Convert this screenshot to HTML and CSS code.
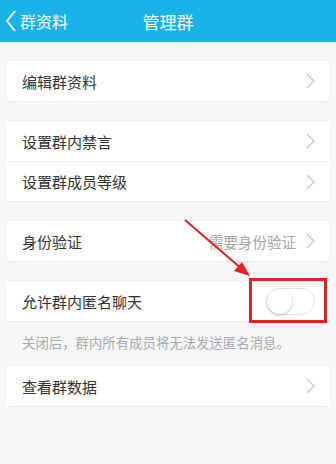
FILE: index.html
```html
<!DOCTYPE html>
<html lang="zh-CN">
    <head>
        <meta charset="UTF-8" />
        <meta name="viewport" content="width=device-width, initial-scale=1.0" />
        <title>管理群</title>
        <link rel="stylesheet" href="styles.css">
    </head>
    <body>
        <!-- Top bar -->
        <header class="topbar">
            <a class="back" href="#">
                <svg width="12" height="22" viewBox="0 0 12 22">
                    <polyline points="10,1 2,11 10,21" fill="none" stroke="#fff" stroke-width="1.8" />
                </svg>
                <span>群资料</span>
            </a>
            <h1 class="title">管理群</h1>
            <span></span>
        </header>

        <main class="content">
            <div class="group">
                <div class="row">
                    <span class="label">编辑群资料</span>
                    <svg class="chevron" width="9" height="16" viewBox="0 0 9 16"><polyline points="1,1 8,8 1,15" /></svg>
                </div>
            </div>

            <div class="group">
                <div class="row">
                    <span class="label">设置群内禁言</span>
                    <svg class="chevron" width="9" height="16" viewBox="0 0 9 16"><polyline points="1,1 8,8 1,15" /></svg>
                </div>
                <div class="row">
                    <span class="label">设置群成员等级</span>
                    <svg class="chevron" width="9" height="16" viewBox="0 0 9 16"><polyline points="1,1 8,8 1,15" /></svg>
                </div>
            </div>

            <div class="group">
                <div class="row">
                    <span class="label">身份验证</span>
                    <span class="value">需要身份验证</span>
                    <svg class="chevron" width="9" height="16" viewBox="0 0 9 16"><polyline points="1,1 8,8 1,15" /></svg>
                </div>
            </div>

            <div class="group">
                <div class="row anon-row">
                    <span class="label">允许群内匿名聊天</span>
                    <span class="toggle"><span class="knob"></span></span>
                    <!-- Annotation box -->
                    <span class="highlight"></span>
                </div>
            </div>
            <p class="hint">关闭后，群内所有成员将无法发送匿名消息。</p>

            <div class="group group-tight">
                <div class="row">
                    <span class="label">查看群数据</span>
                    <svg class="chevron" width="9" height="16" viewBox="0 0 9 16"><polyline points="1,1 8,8 1,15" /></svg>
                </div>
            </div>
        </main>

        <!-- Annotation arrow -->
        <svg class="arrow" width="80" height="70" viewBox="0 0 80 70">
            <line x1="2" y1="2" x2="60" y2="52" stroke="#e3211f" stroke-width="2" />
            <polygon points="67,58 51,53 59,44" fill="#e3211f" />
        </svg>
    </body>
</html>
```

FILE: styles.css
```css
* {
    box-sizing: border-box;
}

body {
    margin: 0;
    padding: 0;
    width: 336px;
    min-height: 464px;
    background-color: #f5f6f8;
    font-family: "Noto Sans CJK SC", "Noto Sans", sans-serif;
    color: #333;
}

.topbar {
    display: grid;
    grid-template-columns: 1fr auto 1fr;
    align-items: center;
    height: 42px;
    background-color: #19b3ea;
    color: #fff;
}

.topbar .back {
    display: flex;
    align-items: center;
    gap: 3px;
    padding-left: 5px;
    color: #fff;
    text-decoration: none;
    font-size: 16px;
}

.topbar .title {
    margin: 0;
    font-size: 17px;
    font-weight: normal;
}

.content {
    padding: 0 7px 20px;
}

.group {
    margin-top: 18px;
    background-color: #fff;
    border-top: 1px solid #eceef0;
    border-bottom: 1px solid #e8eaec;
    border-radius: 2px;
}

.group-tight {
    margin-top: 0;
}

.row {
    display: flex;
    align-items: center;
    height: 40px;
    padding: 0 14px 0 15px;
    font-size: 15px;
}

.row + .row {
    border-top: 1px solid #eceef0;
}

.row .label {
    flex-grow: 1;
}

.row .value {
    color: #a3a3a3;
    font-size: 14.5px;
    margin-right: 10px;
}

.chevron polyline {
    fill: none;
    stroke: #c4c4c8;
    stroke-width: 1.3;
}

.anon-row {
    position: relative;
}

.toggle {
    position: relative;
    width: 49px;
    height: 27px;
    border: 1px solid #e3e3e3;
    border-radius: 14px;
    background-color: #fff;
}

.toggle .knob {
    position: absolute;
    top: 0;
    left: 0;
    width: 25px;
    height: 25px;
    border-radius: 50%;
    background-color: #fff;
    box-shadow: 0 1px 3px rgba(0, 0, 0, 0.25);
}

.highlight {
    position: absolute;
    left: 242px;
    top: -3px;
    width: 78px;
    height: 45px;
    border: 3px solid #e3211f;
}

.hint {
    margin: 0;
    padding: 11px 15px 14px;
    font-size: 13.4px;
    color: #a9a9a9;
    line-height: 18px;
}

.arrow {
    position: absolute;
    left: 183px;
    top: 218px;
}
```
